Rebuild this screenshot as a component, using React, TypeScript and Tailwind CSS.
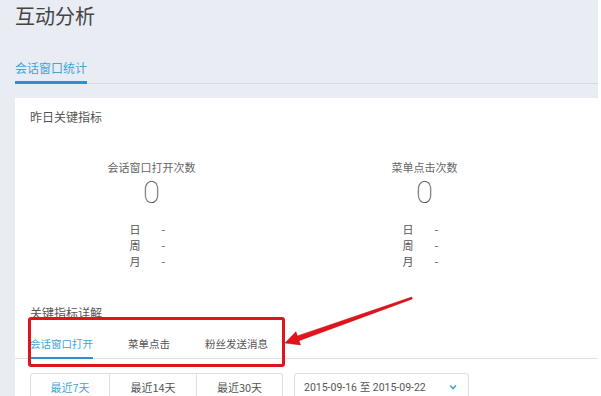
import React from "react";

const cjk = { fontFamily: '"Noto Sans CJK SC", "Noto Sans", sans-serif' };
const num = { fontFamily: 'Roboto, "Liberation Sans", sans-serif' };

function Metric({ label }: { label: string }) {
  return (
    <div className="w-[273px] flex flex-col items-center">
      <div className="text-[11px] leading-[14px] text-[#666]">{label}</div>
      <div style={num} className="mt-[1px] h-[36px] text-[31px] leading-[36px] font-thin text-[#444]">
        0
      </div>
      <div className="mt-[10px] w-[44px] text-[11px] leading-[16px] text-[#555]">
        {["日", "周", "月"].map((d) => (
          <div key={d} className="flex">
            <span className="w-[32px]">{d}</span>
            <span>-</span>
          </div>
        ))}
      </div>
    </div>
  );
}

export default function App() {
  return (
    <div style={cjk} className="relative w-[601px] h-[396px] overflow-hidden bg-white">
      <div className="w-[598px] h-[396px] bg-[#e9ecf3] pl-[15px]">
        <h1 className="pt-[4px] text-[20px] leading-[24px] text-[#444] font-normal">互动分析</h1>

        <div className="mt-[33px] flex items-end border-b border-[#d6dae3]">
          <div className="whitespace-nowrap pb-[6px] text-[12px] leading-[14px] text-[#3fa6d6] border-b-[3px] border-[#2f8fcf] -mb-px">
            会话窗口统计
          </div>
        </div>

        <div className="mt-[14px] bg-white h-[300px]">
          <div className="pt-[11px] pl-[15px] text-[12px] leading-[16px] text-[#555]">昨日关键指标</div>

          <div className="mt-[35px] flex">
            <Metric label="会话窗口打开次数" />
            <Metric label="菜单点击次数" />
          </div>

          <div className="mt-[36px] pl-[15px] text-[12px] leading-[16px] text-[#555]">关键指标详解</div>

          <div className="mt-[16px] flex gap-[35px] pl-[15px] border-b border-[#dfe2e8] text-[10.5px] leading-[14px]">
            <div className="whitespace-nowrap pb-[6px] text-[#3fa6d6] border-b-2 border-[#2f8fcf] -mb-px">会话窗口打开</div>
            <div className="whitespace-nowrap pb-[6px] text-[#555]">菜单点击</div>
            <div className="whitespace-nowrap pb-[6px] text-[#555]">粉丝发送消息</div>
          </div>

          <div className="mt-[14px] pl-[15px] flex gap-[11px]">
            <div className="flex h-[28px] text-[11px]">
              <div className="w-[80px] flex items-center justify-center border border-[#dcdfe5] rounded-l-[3px] text-[#3fa6d6]">
                最近7天
              </div>
              <div className="w-[87px] flex items-center justify-center border-y border-r border-[#dcdfe5] text-[#555]">
                最近14天
              </div>
              <div className="w-[86px] flex items-center justify-center border-y border-r border-[#dcdfe5] rounded-r-[3px] text-[#555]">
                最近30天
              </div>
            </div>
            <div className="w-[175px] h-[28px] flex items-center justify-between pl-[9px] pr-[11px] border border-[#dcdfe5] rounded-[3px] text-[#555]">
              <span style={num} className="whitespace-nowrap text-[10.5px]">
                2015-09-16 <span style={cjk}>至</span> 2015-09-22
              </span>
              <svg width="8" height="6" viewBox="0 0 8 6" fill="none">
                <path d="M1 1.5 L4 4.5 L7 1.5" stroke="#3fa6d6" strokeWidth="1.6" />
              </svg>
            </div>
          </div>
        </div>
      </div>

      {/* annotation: red box + arrow */}
      <div className="absolute left-[28px] top-[317px] w-[257px] h-[50px] border-[3px] border-[#e0141c] rounded-[3px] pointer-events-none" />
      <svg className="absolute left-0 top-0 pointer-events-none" width="601" height="396">
        <polygon
          points="285,343 295.9,331.7 297.4,335.95 411.7,297.1 412.3,298.9 299,340.7 300.5,344.9"
          fill="#e3121b"
          stroke="#b80d14"
          strokeWidth="0.5"
        />
      </svg>
    </div>
  );
}
